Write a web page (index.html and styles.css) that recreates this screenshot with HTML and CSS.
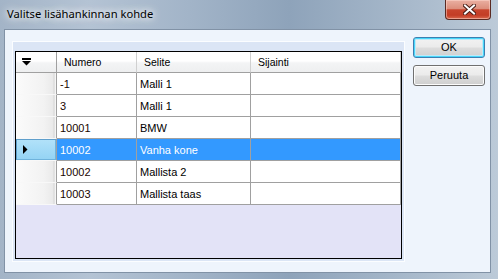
FILE: index.html
```html
<!DOCTYPE html>
<html>
<head>
<meta charset="utf-8">
<link rel="stylesheet" href="styles.css">
</head>
<body>
<div class="window">
  <div class="titlebar">
    <span class="title">Valitse lisähankinnan kohde</span>
    <div class="close">
      <svg width="13" height="11" viewBox="0 0 13 11">
        <path d="M2,1.5 L11,9.5 M11,1.5 L2,9.5" stroke="#4a1e16" stroke-width="4" stroke-linecap="square" fill="none"/>
        <path d="M2,1.5 L11,9.5 M11,1.5 L2,9.5" stroke="#ffffff" stroke-width="2" stroke-linecap="square" fill="none"/>
      </svg>
    </div>
  </div>
  <div class="client">
    <div class="panel">
      <div class="grid">
        <div class="hcell corner">
          <svg width="9" height="8" viewBox="0 0 9 8"><rect x="0" y="0" width="9" height="2" fill="#000"/><polygon points="0,3 9,3 4.5,7.5" fill="#000"/></svg>
        </div>
        <div class="hcell">Numero</div>
        <div class="hcell">Selite</div>
        <div class="hcell">Sijainti</div>

        <div class="rh"></div>
        <div class="cell num">-1</div>
        <div class="cell">Malli 1</div>
        <div class="cell"></div>

        <div class="rh"></div>
        <div class="cell num">3</div>
        <div class="cell">Malli 1</div>
        <div class="cell"></div>

        <div class="rh"></div>
        <div class="cell num">10001</div>
        <div class="cell">BMW</div>
        <div class="cell"></div>

        <div class="rh current"><svg width="5" height="9" viewBox="0 0 5 9"><polygon points="0,0 4.5,4.5 0,9" fill="#000"/></svg></div>
        <div class="cell num sel">10002</div>
        <div class="cell sel">Vanha kone</div>
        <div class="cell sel"></div>

        <div class="rh"></div>
        <div class="cell num">10002</div>
        <div class="cell">Mallista 2</div>
        <div class="cell"></div>

        <div class="rh"></div>
        <div class="cell num">10003</div>
        <div class="cell">Mallista taas</div>
        <div class="cell"></div>
      </div>
    </div>
    <div class="buttons">
      <div class="btn default">OK</div>
      <div class="btn">Peruuta</div>
    </div>
  </div>
</div>
</body>
</html>
```

FILE: styles.css
```css
html, body {
  margin: 0;
  padding: 0;
}
body {
  width: 498px;
  height: 279px;
  overflow: hidden;
  background: #9aacc0;
}
.window {
  width: 498px;
  height: 279px;
  display: flex;
  flex-direction: column;
  background: linear-gradient(90deg, #a3b4c7 0%, #b4c3d4 18%, #a2b4c8 38%, #8ea3ba 58%, #a3b5c8 78%, #bccad8 100%);
}
.titlebar {
  height: 29px;
  display: flex;
  justify-content: space-between;
  align-items: flex-start;
  flex: none;
}
.title {
  font-family: "Segoe UI", "Noto Sans", sans-serif;
  font-size: 11.2px;
  color: #000;
  padding: 6px 0 0 7px;
  line-height: 16px;
  text-shadow: 0 0 6px #fff, 0 0 10px rgba(255,255,255,0.9), 0 0 14px rgba(255,255,255,0.7);
}
.close {
  width: 44px;
  height: 19px;
  margin-right: 7px;
  border: 1px solid #5a2a22;
  border-top: none;
  border-radius: 0 0 4px 4px;
  background: linear-gradient(180deg, #eab0a2 0%, #dc8f7c 45%, #c8452d 52%, #c33d26 80%, #d9694e 100%);
  box-shadow: inset 0 0 0 1px rgba(255,220,210,0.5);
  display: flex;
  align-items: center;
  justify-content: center;
}
.close svg {
  display: block;
  margin-left: 3px;
}
.client {
  flex: 1;
  margin: 0 7px 6px 4px;
  border: 1px solid #8192a6;
  background: #eef4fc;
  display: flex;
  align-items: flex-start;
  padding-left: 7px;
}
.panel {
  margin-top: 11px;
  width: 387px;
  height: 208px;
  border: 1px solid #fbfdff;
  background: #dbe5f5;
  padding: 9px 2px 2px 2px;
  box-sizing: content-box;
  display: flex;
  flex-direction: column;
}
.grid {
  width: 385px;
  height: 206px;
  border: 1px solid #000;
  background: #e3e3f7;
  display: grid;
  grid-template-columns: 41px 80px 114px 150px;
  grid-template-rows: 21px repeat(6, 22px);
  align-content: start;
  font-family: "Liberation Sans", Arial, sans-serif;
  font-size: 11px;
  color: #000;
}
.hcell {
  box-sizing: border-box;
  border-right: 1px solid #d0d0d0;
  border-bottom: 1px solid #a0a0a0;
  background: linear-gradient(180deg, #ffffff 0%, #ffffff 45%, #f3f4f5 55%, #eeeff0 100%);
  font-size: 10.5px;
  line-height: 20px;
  padding-left: 7px;
  white-space: nowrap;
}
.hcell.corner {
  border-right: 1px solid #a0a0a0;
  display: flex;
  align-items: center;
  padding-left: 6px;
}
.hcell.corner svg {
  display: block;
}
.rh {
  box-sizing: border-box;
  border-right: 1px solid #a0a0a0;
  border-bottom: 1px solid #f8f8f8;
  background: linear-gradient(90deg, #fbfbfb 0%, #f2f2f2 70%, #eaeaea 92%, #d9d9d9 95%, #ffffff 100%);
}
.rh.current {
  background: linear-gradient(180deg, #b3e2f9 0%, #93d3f4 100%);
  box-shadow: inset 1px 1px 0 #5f9fcc, inset -1px -1px 0 #6fb3dc;
  display: flex;
  align-items: center;
  padding-left: 7px;
}
.rh.current svg {
  display: block;
}
.cell {
  box-sizing: border-box;
  border-right: 1px solid #a0a0a0;
  border-bottom: 1px solid #a0a0a0;
  background: #fff;
  line-height: 21px;
  padding-left: 3px;
  padding-top: 1px;
  white-space: nowrap;
}
.cell.num {
  color: #1a0500;
}
.cell.sel {
  background: #3399ff;
  color: #fff;
}
.buttons {
  margin-top: 7px;
  margin-left: 8px;
  display: flex;
  flex-direction: column;
  gap: 7px;
}
.btn {
  box-sizing: border-box;
  width: 72px;
  height: 21px;
  border: 1px solid #707070;
  border-radius: 3px;
  background: linear-gradient(180deg, #f2f2f2 0%, #ebebeb 48%, #dddddd 52%, #cfcfcf 100%);
  box-shadow: inset 0 0 0 1px #fcfcfc;
  font-family: "Liberation Sans", Arial, sans-serif;
  font-size: 11px;
  line-height: 19px;
  text-align: center;
  color: #000;
}
.btn.default {
  border-color: #3c7fb1;
  box-shadow: inset 0 0 0 1px #48d7fb, inset 0 0 0 2px #bfe9f8;
}
```
